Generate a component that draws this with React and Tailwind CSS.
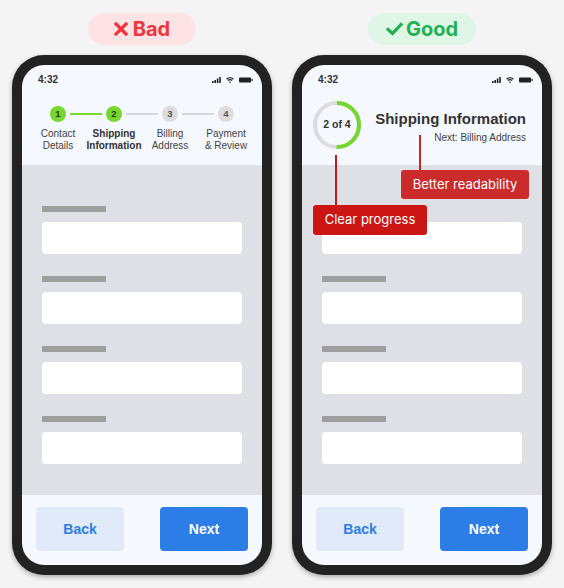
import React from "react";

function StatusBar() {
  return (
    <div className="h-[30px] pl-4 pr-[9px] flex items-center justify-between">
      <span className="text-[10px] font-bold text-[#333] leading-none">4:32</span>
      <div className="flex items-center gap-[5px]">
        <svg width="9" height="6" viewBox="0 0 9 6" fill="#222">
          <rect x="0" y="4" width="1.6" height="2" />
          <rect x="2.4" y="3" width="1.6" height="3" />
          <rect x="4.8" y="1.5" width="1.6" height="4.5" />
          <rect x="7.2" y="0" width="1.6" height="6" />
        </svg>
        <svg width="8" height="6" viewBox="0 0 8 6" fill="none" stroke="#222" strokeWidth="1.2">
          <path d="M0.6 2.2 A5 5 0 0 1 7.4 2.2" />
          <path d="M1.9 3.5 A3.2 3.2 0 0 1 6.1 3.5" />
          <circle cx="4" cy="5.2" r="0.8" fill="#222" stroke="none" />
        </svg>
        <svg width="14" height="6" viewBox="0 0 14 6" fill="#222">
          <rect x="0" y="0.5" width="12.2" height="5" rx="1" />
          <rect x="12.6" y="2" width="1.2" height="2" rx="0.4" />
        </svg>
      </div>
    </div>
  );
}

function Phone({ header, children }) {
  return (
    <div className="w-[260px] h-[520px] rounded-[32px] bg-[#222] p-[10px] shadow-[0_2px_5px_rgba(0,0,0,0.3)]">
      <div className="relative w-[240px] h-[500px] rounded-[22px] overflow-hidden bg-[#f5f8ff] flex flex-col">
        <div className="h-[100px]">
          <StatusBar />
          {header}
        </div>
        <div className="flex-1 bg-[#dfe0e5] px-5 pt-[41px] flex flex-col gap-[22px]">
          {[0, 1, 2, 3].map((i) => (
            <div key={i}>
              <div className="w-16 h-[6px] bg-[#9e9e9e]" />
              <div className="mt-[10px] h-8 bg-white rounded-[4px]" />
            </div>
          ))}
        </div>
        <div className="h-[70px] px-[14px] pt-3 flex justify-between">
          <button className="w-[88px] h-11 rounded-[4px] bg-[#e0eaf9] text-[#2e7de3] text-[14px] font-bold">
            Back
          </button>
          <button className="w-[88px] h-11 rounded-[4px] bg-[#2d7de6] text-white text-[14px] font-bold">
            Next
          </button>
        </div>
        {children}
      </div>
    </div>
  );
}

function StepDot({ n, done }) {
  return (
    <div
      className={
        done
          ? "w-4 h-4 rounded-full bg-[#76d72e] text-[#2f3a26] flex items-center justify-center text-[9.5px] font-bold leading-none"
          : "w-4 h-4 rounded-full bg-[#dcdcdc] text-[#555] flex items-center justify-center text-[9.5px] font-bold leading-none"
      }
    >
      {n}
    </div>
  );
}

function Stepper() {
  return (
    <div>
      <div className="mt-[11px] pl-[28px] flex items-center">
        <StepDot n="1" done />
        <div className="w-8 h-[2px] mx-1 bg-[#76d72e]" />
        <StepDot n="2" done />
        <div className="w-8 h-[2px] mx-1 bg-[#d6d6d6]" />
        <StepDot n="3" />
        <div className="w-8 h-[2px] mx-1 bg-[#d6d6d6]" />
        <StepDot n="4" />
      </div>
      <div className="mt-[6px] ml-2 w-[224px] grid grid-cols-4 text-center text-[10px] leading-[12px] text-[#444]">
        <div>Contact<br />Details</div>
        <div className="font-bold text-[#333]">Shipping<br />Information</div>
        <div>Billing<br />Address</div>
        <div>Payment<br />&amp; Review</div>
      </div>
    </div>
  );
}

function ProgressHeader() {
  return (
    <div className="mt-[6px] pl-[11px] pr-4 flex items-start justify-between">
      <div className="relative w-12 h-12">
        <svg width="48" height="48" viewBox="0 0 48 48" className="-rotate-90">
          <circle cx="24" cy="24" r="22" fill="none" stroke="#dcdcdc" strokeWidth="4" />
          <circle
            cx="24"
            cy="24"
            r="22"
            fill="none"
            stroke="#74d72b"
            strokeWidth="4"
            strokeDasharray="69.1 138.2"
          />
        </svg>
        <div className="absolute inset-0 flex items-center justify-center text-[10.5px] font-bold text-[#333]">
          2 of 4
        </div>
      </div>
      <div className="mt-[9px] text-right">
        <div className="text-[15px] leading-[18px] font-bold text-[#333]">Shipping Information</div>
        <div className="mt-1 text-[10px] leading-3 text-[#444]">Next: Billing Address</div>
      </div>
    </div>
  );
}

export default function App() {
  return (
    <div className="w-[564px] h-[588px] bg-[#f4f4f4] flex justify-center gap-5 pt-[13px] font-['Liberation_Sans',Arial,sans-serif]">
      <div className="w-[260px] flex flex-col items-center">
        <div className="w-[108px] h-8 rounded-full bg-[#fde3e3] flex items-center justify-center gap-[5px] font-['Inter',sans-serif] text-[20px] font-bold text-[#f0353d] mb-[10px]">
          <svg width="14" height="14" viewBox="0 0 14 14" stroke="#f0353d" strokeWidth="3.2" strokeLinecap="square">
            <path d="M2 2 L12 12 M12 2 L2 12" />
          </svg>
          <span className="leading-none">Bad</span>
        </div>
        <Phone header={<Stepper />} />
      </div>

      <div className="w-[260px] flex flex-col items-center">
        <div className="w-[108px] h-8 rounded-full bg-[#dff6e6] flex items-center justify-center gap-[3px] font-['Inter',sans-serif] text-[20px] font-bold text-[#1fb14f] mb-[10px]">
          <svg width="17" height="14" viewBox="0 0 17 14" fill="none" stroke="#1fb14f" strokeWidth="3.2" strokeLinecap="square">
            <path d="M2 7.5 L6.5 11.5 L15 2.5" />
          </svg>
          <span className="leading-none">Good</span>
        </div>
        <Phone header={<ProgressHeader />}>
          {/* callouts pointing at the ring and the title */}
          <div className="absolute left-[33px] top-[90px] w-[2px] h-[50px] bg-[#c41c1c]" />
          <div className="absolute left-[117px] top-[70px] w-[2px] h-[35px] bg-[#c62828]" />
          <div className="absolute left-[99px] top-[105px] w-[128px] h-[29px] rounded-[3px] bg-[#cb2b2b] flex items-center justify-center font-['Inter',sans-serif] text-[13px] text-white">
            Better readability
          </div>
          <div className="absolute left-[11px] top-[140px] w-[114px] h-[30px] rounded-[3px] bg-[#cc1616] flex items-center justify-center font-['Inter',sans-serif] text-[13px] text-white">
            Clear progress
          </div>
        </Phone>
      </div>
    </div>
  );
}
